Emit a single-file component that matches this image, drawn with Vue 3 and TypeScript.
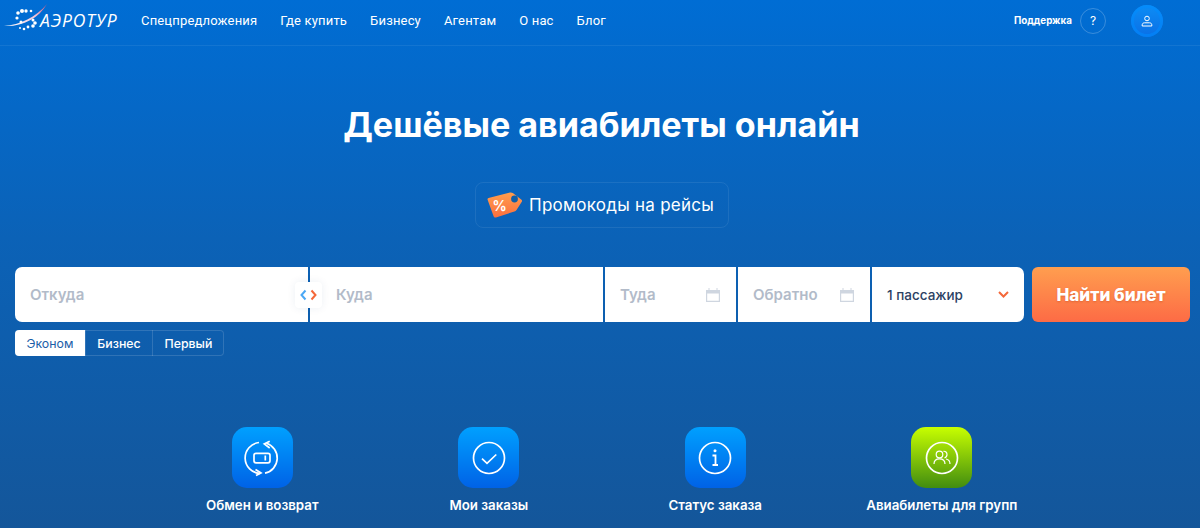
<template>
  <div class="page">
    <header class="topbar">
      <a class="logo" href="#" aria-label="Аэротур">
        <svg width="120" height="32" viewBox="0 0 120 32">
          <defs>
            <linearGradient id="swoosh" x1="0" y1="1" x2="1" y2="0">
              <stop offset="0" stop-color="#ffffff" />
              <stop offset="0.6" stop-color="#f0c3d8" />
              <stop offset="1" stop-color="#d8486f" />
            </linearGradient>
          </defs>
          <path d="M4 26 C20 25 36 17 47 4 C38 19 22 27 4 26 Z" fill="url(#swoosh)" />
          <circle v-for="(dot, i) in logoDots" :key="i" :cx="dot[0]" :cy="dot[1]" :r="dot[2]" fill="#fff" />
          <text x="40" y="27" class="logo-text">АЭРОТУР</text>
        </svg>
      </a>
      <nav class="menu">
        <a v-for="item in menu" :key="item" href="#">{{ item }}</a>
      </nav>
      <div class="support">
        <span>Поддержка</span>
        <button class="help" type="button">?</button>
      </div>
      <button class="avatar" type="button" aria-label="Профиль">
        <svg width="12" height="12" viewBox="0 0 12 12" fill="none" stroke="#fff" stroke-width="1">
          <circle cx="6" cy="3.5" r="2.3" />
          <path d="M1.2 11 V9.8 C1.2 8.4 2.4 7.8 3.6 7.8 H8.4 C9.6 7.8 10.8 8.4 10.8 9.8 V11 Z" />
        </svg>
      </button>
    </header>

    <main class="content">
      <h1>Дешёвые авиабилеты онлайн</h1>

      <a class="promo" href="#">
        <svg width="36" height="28" viewBox="0 0 36 28">
          <defs>
            <linearGradient id="tag" x1="0" y1="0" x2="0" y2="1">
              <stop offset="0" stop-color="#ff9e4d" />
              <stop offset="1" stop-color="#fb6f3f" />
            </linearGradient>
          </defs>
          <path d="M1.5 7 L23 1.500 C24 1.300 25 1.500 25.800 2.100 L34.500 8.800 C35.200 9.400 35.200 10.100 34.800 10.800 L29.500 19 C29 19.800 28.300 20.300 27.400 20.500 L9 26.500 C7.800 26.800 7 26.300 6.600 25.200 L.6 8.800 C.3 8 .7 7.300 1.500 7 Z" fill="url(#tag)" />
          <circle cx="27.500" cy="8" r="3.400" fill="#0e5ea8" />
          <text x="5.500" y="20" class="tag-text">%</text>
        </svg>
        <span>Промокоды на рейсы</span>
      </a>

      <form class="search" @submit.prevent>
        <div class="fields">
          <label class="field from">Откуда</label>
          <label class="field to">
            <span class="swap">
              <svg width="17" height="12" viewBox="0 0 17 12" fill="none" stroke-width="2">
                <path d="M5.500 1.500 L1.500 6 L5.500 10.500" stroke="#4aa8f5" />
                <path d="M11.500 1.500 L15.500 6 L11.500 10.500" stroke="#f4683a" />
              </svg>
            </span>
            Куда
          </label>
          <label class="field date">
            Туда
            <svg class="cal" width="16" height="16" viewBox="0 0 16 16"><use href="#cal" /></svg>
          </label>
          <label class="field date">
            Обратно
            <svg class="cal" width="16" height="16" viewBox="0 0 16 16">
              <symbol id="cal" viewBox="0 0 16 16">
                <path d="M1 3 H3.500 V1 H4.500 V3 H11.500 V1 H12.500 V3 H15 V15 H1 Z M2.200 6.500 V13.800 H13.800 V6.500 Z" fill="#cfd6e0" />
              </symbol>
              <use href="#cal" />
            </svg>
          </label>
          <div class="field pax">
            <span>1 пассажир</span>
            <svg width="11" height="7" viewBox="0 0 11 7" fill="none" stroke="#f4683a" stroke-width="2">
              <path d="M1 1 L5.500 5.500 L10 1" />
            </svg>
          </div>
        </div>
        <button class="find" type="submit">Найти билет</button>
      </form>

      <div class="classes">
        <button
          v-for="item in classes"
          :key="item"
          type="button"
          :class="{ active: item === cabin }"
          @click="cabin = item"
        >
          {{ item }}
        </button>
      </div>

      <section class="features">
        <a class="feature" href="#">
          <span class="tile">
            <svg width="46" height="46" viewBox="0 0 46 46" fill="none" stroke="#fff" stroke-width="1.700">
              <path d="M20 7.500 A15.500 15.500 0 0 0 21 38.400" />
              <path d="M16.500 34.500 L22 38 L17 40.500" />
              <path d="M26 38.200 A15.500 15.500 0 0 0 27.500 8.300" />
              <path d="M30.700 6.300 L25.300 9 L30.700 13" />
              <rect x="15" y="18.300" width="16" height="9.500" rx="2" />
              <path d="M26.300 20.500 V25.500" />
            </svg>
          </span>
          <span>Обмен и возврат</span>
        </a>
        <a class="feature" href="#">
          <span class="tile">
            <svg width="46" height="46" viewBox="0 0 46 46" fill="none" stroke="#fff" stroke-width="1.700">
              <circle cx="23" cy="23" r="15.500" />
              <path d="M16 23.700 L21 28.300 L30.300 19.500" />
            </svg>
          </span>
          <span>Мои заказы</span>
        </a>
        <a class="feature" href="#">
          <span class="tile">
            <svg width="46" height="46" viewBox="0 0 46 46" fill="none" stroke="#fff" stroke-width="1.700">
              <circle cx="23" cy="23" r="15.500" />
              <circle cx="23" cy="15.800" r="1.500" fill="#fff" stroke="none" />
              <path d="M20.500 20.500 H23.500 V30 M20.500 30 H26" stroke-width="1.800" />
            </svg>
          </span>
          <span>Статус заказа</span>
        </a>
        <a class="feature" href="#">
          <span class="tile green">
            <svg width="46" height="46" viewBox="0 0 46 46" fill="none" stroke="#fff" stroke-width="1.700">
              <circle cx="23" cy="23" r="15.500" />
              <circle cx="20.500" cy="19.500" r="3.300" stroke-width="1.200" />
              <path d="M15 29 C15 25.500 17.500 23.800 20.500 23.800 C23.500 23.800 26 25.500 26 29" stroke-width="1.200" />
              <path d="M24.500 16.300 C26.500 16 28 17.500 28 19.500 C28 21 27 22.500 25.500 22.800 M27 24 C29.500 24.500 31 26.500 31 29" stroke-width="1.200" />
            </svg>
          </span>
          <span>Авиабилеты для групп</span>
        </a>
      </section>
    </main>
  </div>
</template>

<script setup lang="ts">
import { ref } from 'vue'

const menu: string[] = ['Спецпредложения', 'Где купить', 'Бизнесу', 'Агентам', 'О нас', 'Блог']
const classes: string[] = ['Эконом', 'Бизнес', 'Первый']
const cabin = ref<string>('Эконом')

// x, y, radius of the dots around the logo swoosh
const logoDots: [number, number, number][] = [
  [18, 13, 1.800], [22, 11, 2], [26, 11, 1.700], [31, 11, 1.300], [17, 18, 1.600],
  [21, 22, 1.500], [33, 20, 1.500], [35, 23, 1.800], [33, 26, 1.800], [28, 27, 1.400],
  [24, 29, 1.300], [20, 28, 1],
]
</script>

<style>
html,
body {
  margin: 0;
  background: #14569b;
}
</style>

<style scoped>
.page {
  height: 528px;
  overflow: hidden;
  background: linear-gradient(180deg, #006dd4 0%, #0b62b7 45%, #14569a 100%);
  color: #fff;
  font-family: Inter, "Noto Sans", sans-serif;
}

a {
  color: inherit;
  text-decoration: none;
}

button {
  font-family: inherit;
  border: 0;
  padding: 0;
  color: inherit;
  cursor: pointer;
}

.topbar {
  display: flex;
  align-items: center;
  height: 46px;
  box-sizing: border-box;
  padding: 0 37px 4px 0;
  border-bottom: 1px solid rgba(255, 255, 255, 0.07);
}

.logo {
  display: block;
  align-self: flex-start;
  width: 120px;
  height: 32px;
  margin-right: 21px;
}

.logo-text {
  fill: #fff;
  font-family: "Open Sans", sans-serif;
  font-size: 17.500px;
  font-style: italic;
  letter-spacing: 0.9px;
}

.menu {
  display: flex;
  gap: 23px;
  font-family: Roboto, sans-serif;
  font-size: 13px;
  font-weight: 400;
  letter-spacing: 0.17px;
}

.support {
  display: flex;
  align-items: center;
  gap: 8px;
  margin-left: auto;
  font-size: 9.800px;
  font-weight: 700;
}

.help {
  width: 26px;
  height: 26px;
  border-radius: 50%;
  border: 1px solid rgba(255, 255, 255, 0.22);
  background: none;
  font-size: 12px;
}

.avatar {
  display: flex;
  align-items: center;
  justify-content: center;
  width: 32px;
  height: 32px;
  margin-left: 25px;
  border-radius: 50%;
  background: linear-gradient(180deg, #0d8df5 0%, #0a6fe6 100%);
  box-shadow: inset 0 0 0 3px rgba(0, 140, 255, 0.55);
}

.content {
  padding: 0 10px 0 15px;
}

h1 {
  margin: 56px 2px 0 0;
  height: 46px;
  font-size: 34.100px;
  line-height: 46px;
  font-weight: 700;
  text-align: center;
}

.promo {
  display: flex;
  align-items: center;
  gap: 6px;
  box-sizing: border-box;
  width: 254px;
  height: 46px;
  margin: 34px 0 0 460px;
  padding-left: 11px;
  border: 1px solid rgba(255, 255, 255, 0.08);
  border-radius: 8px;
  font-size: 17px;
  font-weight: 400;
  letter-spacing: 0.25px;
}

.tag-text {
  fill: #fff;
  font-family: Inter, sans-serif;
  font-size: 14px;
  font-weight: 700;
}

.search {
  display: flex;
  gap: 8px;
  margin-top: 39px;
}

.fields {
  display: grid;
  grid-template-columns: 293px 293px 131px 132px 1fr;
  gap: 2px;
  flex: 1;
  height: 55px;
}

.field {
  position: relative;
  display: flex;
  align-items: center;
  justify-content: space-between;
  padding: 0 15px;
  background: #fff;
  color: #b2bbc9;
  font-size: 15px;
  font-weight: 600;
}

.from {
  border-radius: 7px 0 0 7px;
}

.to {
  justify-content: flex-start;
  padding-left: 26px;
}

.swap {
  position: absolute;
  left: -15px;
  top: 15px;
  display: flex;
  align-items: center;
  justify-content: center;
  width: 27px;
  height: 26px;
  border-radius: 4px;
  background: #fff;
  box-shadow: 0 0 8px rgba(20, 60, 110, 0.08);
}

.pax {
  border-radius: 0 7px 7px 0;
  color: #2b4163;
  font-size: 13.500px;
  font-weight: 500;
}

.find {
  flex: none;
  width: 158px;
  height: 55px;
  border-radius: 6px;
  background: linear-gradient(180deg, #ff9e4f 0%, #fd6b45 100%);
  font-size: 17.200px;
  font-weight: 800;
  text-shadow: 0 1px 2px rgba(170, 60, 20, 0.35);
}

.classes {
  display: flex;
  width: max-content;
  margin-top: 8px;
  border-radius: 4px;
  box-shadow: inset 0 0 0 1px rgba(255, 255, 255, 0.14);
}

.classes button {
  height: 26px;
  padding: 0 11.500px;
  background: none;
  font-size: 12.300px;
  font-weight: 500;
  border-left: 1px solid rgba(255, 255, 255, 0.14);
}

.classes button:first-child {
  border-left: 0;
}

.classes button.active {
  border-radius: 4px 0 0 4px;
  background: #fff;
  color: #1b5ea8;
  font-weight: 400;
  font-size: 12.300px;
}

.features {
  display: grid;
  grid-template-columns: repeat(4, 226.500px);
  justify-content: center;
  margin: 71px 1px 0 0;
}

.feature {
  display: flex;
  flex-direction: column;
  align-items: center;
  gap: 8px;
  font-size: 13.300px;
  font-weight: 600;
  line-height: 18px;
}

.tile {
  display: flex;
  align-items: center;
  justify-content: center;
  width: 61px;
  height: 61px;
  border-radius: 15px;
  background: linear-gradient(180deg, #00a0ff 0%, #0062e6 100%);
}

.tile.green {
  background: linear-gradient(180deg, #c8ff00 0%, #418c10 100%);
}
</style>
